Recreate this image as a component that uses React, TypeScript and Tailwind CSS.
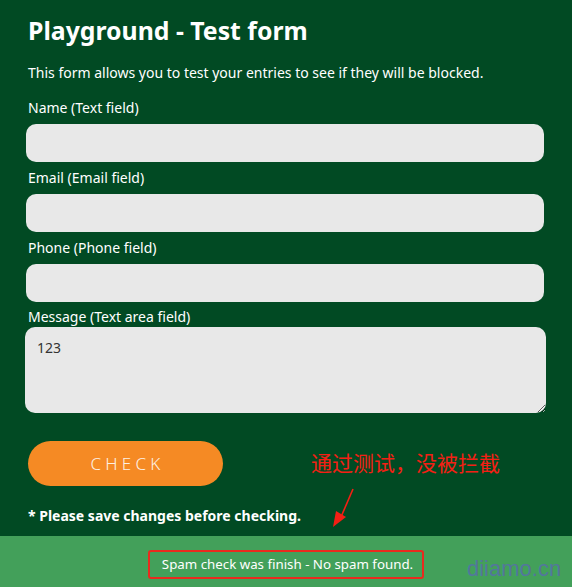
import React from "react";

const fields = [
  { label: "Name (Text field)", type: "text" },
  { label: "Email (Email field)", type: "email" },
  { label: "Phone (Phone field)", type: "tel" },
];

const font = { fontFamily: '"Noto Sans", "Noto Sans CJK SC", sans-serif' };

export default function App() {
  return (
    <div className="relative w-[572px] h-[587px] overflow-hidden bg-[#014a23]" style={font}>
      {/* Form */}
      <div className="px-[26px] pt-[12px] text-white">
        <h1 className="pl-[2px] text-[24.8px] font-bold leading-[36px]">Playground - Test form</h1>
        <p className="pl-[2px] mt-[15px] text-[14px] leading-[20px]">
          This form allows you to test your entries to see if they will be blocked.
        </p>

        <div className="mt-[15px] flex flex-col">
          {fields.map((f) => (
            <div key={f.label} className="flex flex-col mb-[6px]">
              <label className="pl-[2px] h-[20px] text-[14px] leading-[20px] mb-[6px]">{f.label}</label>
              <input
                type={f.type}
                className="w-[518px] h-[38px] rounded-[10px] bg-[#e8e8e8] outline-none px-3 text-[14px] text-[#333]"
              />
            </div>
          ))}
          <label className="pl-[2px] h-[20px] text-[14px] leading-[20px] -mt-[1px]">Message (Text area field)</label>
          <textarea
            defaultValue="123"
            className="w-[521px] h-[86px] -ml-[1px] rounded-[10px] bg-[#e8e8e8] outline-none px-[12px] py-[11px] text-[14px] text-[#333] leading-[20px]"
          />
        </div>

        <button className="mt-[28px] ml-[2px] w-[195px] h-[45px] rounded-full bg-[#f58a24] text-[#fdf1e4] text-[17px] font-light tracking-[0.25em] pl-[4px]">
          CHECK
        </button>

        <p className="pl-[2px] mt-[20px] text-[14px] font-bold leading-[20px]">* Please save changes before checking.</p>
      </div>

      {/* Result bar */}
      <div className="absolute left-0 right-0 top-[536px] h-[51px] bg-[#43a05a] flex items-start justify-center pt-[14px]">
        <div className="h-[29px] pl-[12px] pr-[9px] flex items-center border-[2.5px] border-[#ea2a1e] rounded-[3px] text-white text-[13.3px]">
          Spam check was finish - No spam found.
        </div>
      </div>

      {/* Annotation */}
      <div
        className="absolute left-[311px] top-[447px] text-[21px] leading-[30px] text-[#f41f14]"
        style={{ fontFamily: '"Noto Sans CJK SC", sans-serif' }}
      >
        通过测试，没被拦截
      </div>
      <svg className="absolute left-[325px] top-[485px]" width="34" height="46" viewBox="0 0 34 46">
        <path d="M28 4 L16 32" stroke="#f41f14" strokeWidth="1.6" fill="none" />
        <path d="M8 42 L11 26 L21 32 Z" fill="#f41f14" />
      </svg>
      <div
        className="absolute left-[467px] top-[557px] text-[22px] leading-[24px] text-[#5670a6]/90"
        style={{ fontFamily: '"Liberation Sans", Arial, sans-serif' }}
      >
        diiamo.cn
      </div>
    </div>
  );
}
